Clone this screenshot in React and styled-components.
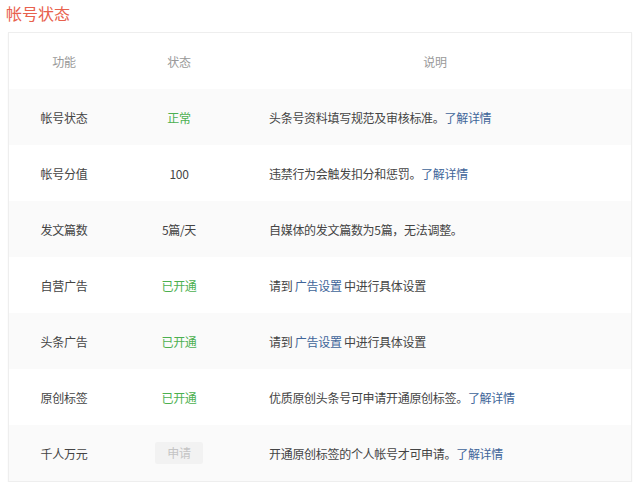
import React from "react";
import styled, { createGlobalStyle } from "styled-components";

const G = createGlobalStyle`
  body { margin: 0; background: #fff; font-family: "Microsoft YaHei", "Noto Sans CJK SC", sans-serif; }
`;
const Page = styled.div`padding: 1px 8px 0 8px; width: 624px;`;
const Title = styled.h1`
  margin: 0 0 7px -2px; font-size: 16px; font-weight: normal; color: #e8614d; line-height: 24px;
`;
const Table = styled.div`
  border: 1px solid #eee; box-shadow: 0 1px 2px rgba(0,0,0,0.04);
`;
const Row = styled.div`
  display: grid; grid-template-columns: 110px 120px 1fr; height: 56px; align-items: center;
  background: ${p => p.$gray ? "#fafafa" : "#fff"};
  font-size: 12px; color: #444; letter-spacing: -0.3px;
`;
const Cell = styled.div`
  text-align: ${p => p.$left ? "left" : "center"};
  padding-left: ${p => p.$left ? "30px" : "0"};
  color: ${p => p.$head ? "#999" : p.$green ? "#4cb050" : "#444"};
`;
const Link = styled.span`color: #406599; cursor: pointer;`;
const Btn = styled.span`
  display: inline-block; width: 48px; height: 22px; line-height: 22px; background: #f2f2f2;
  color: #c4c4c4; font-size: 12px; border-radius: 2px;
`;

const rows = [
  ["帐号状态", "正常", true, <>头条号资料填写规范及审核标准。<Link>了解详情</Link></>],
  ["帐号分值", "100", false, <>违禁行为会触发扣分和惩罚。<Link>了解详情</Link></>],
  ["发文篇数", "5篇/天", false, <>自媒体的发文篇数为5篇，无法调整。</>],
  ["自营广告", "已开通", true, <>请到 <Link>广告设置</Link> 中进行具体设置</>],
  ["头条广告", "已开通", true, <>请到 <Link>广告设置</Link> 中进行具体设置</>],
  ["原创标签", "已开通", true, <>优质原创头条号可申请开通原创标签。<Link>了解详情</Link></>],
  ["千人万元", null, false, <>开通原创标签的个人帐号才可申请。<Link>了解详情</Link></>],
];

export default function App() {
  return (
    <Page>
      <G />
      <Title>帐号状态</Title>
      <Table>
        <Row>
          <Cell $head>功能</Cell><Cell $head>状态</Cell><Cell $head>说明</Cell>
        </Row>
        {rows.map((r, i) => (
          <Row key={i} $gray={i % 2 === 0}>
            <Cell>{r[0]}</Cell>
            <Cell $green={r[2]}>{r[1] ?? <Btn>申请</Btn>}</Cell>
            <Cell $left>{r[3]}</Cell>
          </Row>
        ))}
      </Table>
    </Page>
  );
}
